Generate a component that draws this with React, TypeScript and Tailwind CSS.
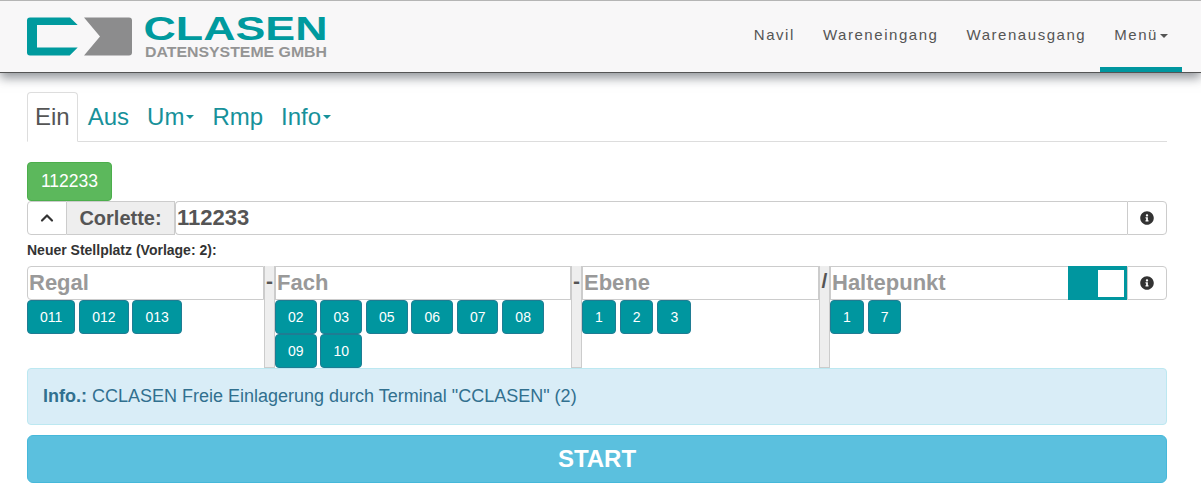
import { ChevronUp } from "lucide-react";
import { FaInfoCircle } from "react-icons/fa";

const navItems = ["Navil", "Wareneingang", "Warenausgang"];

const Caret = ({ className }: { className: string }) => (
  <span
    className={`inline-block w-0 h-0 ml-[2px] border-x-[4px] border-x-transparent border-t-[4px] align-middle ${className}`}
  />
);

const Logo = () => (
  <svg width="302" height="70" viewBox="0 0 302 70" className="block">
    {/* Bildmarke */}
    <g transform="translate(0 14)">
      <path
        d="M3 1.5H43L50.7 9H10V31.5H50.7L42.7 39.5H3Q0 39.5 0 36.5V4.5Q0 1.5 3 1.5Z"
        fill="#009a9e"
      />
      <path
        d="M57 1.5H102Q105 1.5 105 4.5V36.5Q105 39.5 102 39.5H57L73 20.5Z"
        fill="#8c8c8d"
      />
    </g>
    <text
      x="116.5"
      y="38"
      fontFamily="Liberation Sans, Arial, sans-serif"
      fontWeight="700"
      fontSize="33"
      fill="#009a9e"
      textLength="184"
      lengthAdjust="spacingAndGlyphs"
    >
      CLASEN
    </text>
    <text
      x="118"
      y="54.5"
      fontFamily="Liberation Sans, Arial, sans-serif"
      fontWeight="700"
      fontSize="15.5"
      fill="#949494"
      textLength="182"
      lengthAdjust="spacingAndGlyphs"
    >
      DATENSYSTEME GMBH
    </text>
  </svg>
);

const Pick = ({ label }: { label: string }) => (
  <button className="h-[34px] px-3 bg-[#00969f] border border-[#1f7c93] rounded-[4px] text-[14px] text-white">
    {label}
  </button>
);

const Picks = ({ items }: { items: string[] }) => (
  <div className="flex flex-wrap gap-x-[3.9px]">
    {items.map((item) => (
      <Pick key={item} label={item} />
    ))}
  </div>
);

const Sep = ({ char }: { char: string }) => (
  <div className="w-[11px] shrink-0 bg-[#eeeeee] border-x border-b border-[#cccccc] flex justify-center h-[102px]">
    <span className="h-[34px] leading-[30px] text-[21px] font-bold text-[#555555]">
      {char}
    </span>
  </div>
);

const InfoAddon = () => (
  <div className="w-[40px] shrink-0 flex items-center justify-center border border-[#cccccc] rounded-r-[4px]">
    <FaInfoCircle size={14} className="text-[#333333]" />
  </div>
);

const fieldClass =
  "h-[34px] w-full min-w-0 bg-white border border-[#cccccc] px-[1px] text-[22px] font-bold text-[#555555] placeholder:text-[#999999] outline-none";

export default function App() {
  return (
    <div className="w-[1201px] h-[502px] bg-white overflow-hidden font-['Liberation_Sans',Arial,sans-serif] text-[#333333]">
      {/* Navbar */}
      <nav className="h-[73px] bg-[#f8f7f8] border-t border-t-[#b5b5b5] border-b border-b-[#555555] shadow-[0_5px_10px_rgba(60,65,75,0.55)] flex items-center justify-between pl-[27px] pr-[19px]">
        <Logo />
        <div className="flex h-full items-stretch text-[15px] tracking-[1.55px] text-[#555555]">
          {navItems.map((item) => (
            <a
              key={item}
              className="flex items-center px-[14px] pt-[3px] border-b-[5px] border-b-transparent"
            >
              {item}
            </a>
          ))}
          <a className="flex items-center px-[14px] pt-[3px] border-b-[5px] border-b-[#00969f]">
            Menü
            <Caret className="border-t-[#555555]" />
          </a>
        </div>
      </nav>

      <main className="pl-[27px] pr-[34px] pt-[19px]">
        {/* Tabs */}
        <div className="flex gap-[2px] h-[50px] border-b border-[#dddddd] text-[24px] text-[#17919a]">
          <a className="h-[50px] flex items-center px-[7px] border border-[#dddddd] border-b-white rounded-t-[4px] bg-white text-[#555555]">
            Ein
          </a>
          <a className="h-[50px] flex items-center px-[8px]">Aus</a>
          <a className="h-[50px] flex items-center px-[8px]">
            Um
            <Caret className="border-t-[#17919a]" />
          </a>
          <a className="h-[50px] flex items-center px-[8px]">Rmp</a>
          <a className="h-[50px] flex items-center px-[8px]">
            Info
            <Caret className="border-t-[#17919a]" />
          </a>
        </div>

        <button className="mt-[20px] block h-[39px] w-[85px] bg-[#5cb85c] border border-[#4cae4c] rounded-[4px] text-[17.5px] text-white">
          112233
        </button>

        {/* Corlette */}
        <div className="flex h-[34px]">
          <div className="w-[40px] shrink-0 flex items-center justify-center border border-[#cccccc] rounded-l-[4px] bg-white">
            <ChevronUp size={20} strokeWidth={2.6} className="text-[#333333]" />
          </div>
          <div className="w-[108px] shrink-0 flex items-center justify-center bg-[#eeeeee] border-y border-r border-[#cccccc] text-[20px] font-bold text-[#555555]">
            Corlette:
          </div>
          <input
            readOnly
            value="112233"
            className={`${fieldClass} flex-1 border-r-0 rounded-l-[4px]`}
          />
          <InfoAddon />
        </div>

        <div className="h-[31px] flex items-center text-[14px] font-bold">
          Neuer Stellplatz (Vorlage: 2):
        </div>

        {/* Stellplatz */}
        <div className="flex h-[102px]">
          <div className="w-[237px] shrink-0">
            <input placeholder="Regal" className={`${fieldClass} rounded-l-[4px]`} />
            <Picks items={["011", "012", "013"]} />
          </div>
          <Sep char="-" />
          <div className="w-[296px] shrink-0">
            <input placeholder="Fach" className={fieldClass} />
            <Picks items={["02", "03", "05", "06", "07", "08", "09", "10"]} />
          </div>
          <Sep char="-" />
          <div className="w-[237px] shrink-0">
            <input placeholder="Ebene" className={fieldClass} />
            <Picks items={["1", "2", "3"]} />
          </div>
          <Sep char="/" />
          <div className="flex-1 min-w-0">
            <div className="flex h-[34px]">
              <input placeholder="Haltepunkt" className={`${fieldClass} flex-1 border-r-0`} />
              <div className="w-[59px] shrink-0 bg-[#00969f] flex items-center justify-end pr-[3px]">
                <div className="w-[26px] h-[27px] bg-white" />
              </div>
              <InfoAddon />
            </div>
            <Picks items={["1", "7"]} />
          </div>
        </div>

        {/* Info */}
        <div className="h-[57px] flex items-center px-[15px] bg-[#d9edf7] border border-[#bce8f1] rounded-[4px] text-[18px] text-[#31708f]">
          <p>
            <b>Info.:</b> CCLASEN Freie Einlagerung durch Terminal "CCLASEN" (2)
          </p>
        </div>

        <button className="mt-[10px] block w-full h-[48px] bg-[#5bc0de] border border-[#46b8da] rounded-[6px] text-[24px] font-bold text-white">
          START
        </button>
      </main>
    </div>
  );
}
